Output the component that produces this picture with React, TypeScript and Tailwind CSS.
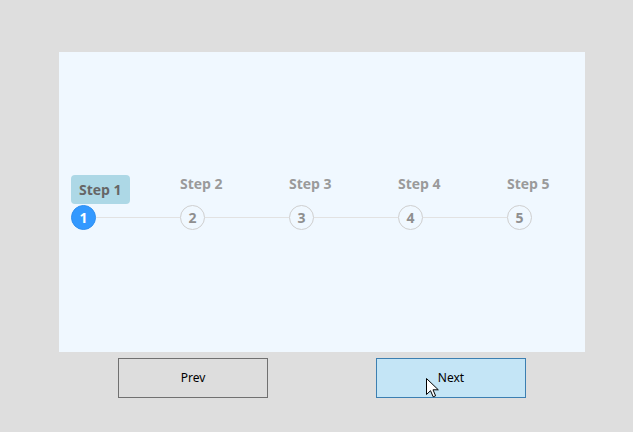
import React from "react";

const steps = [1, 2, 3, 4, 5];

function Step({ n, active, last }: { n: number; active: boolean; last: boolean }) {
  return (
    <div className="flex flex-col w-[109px] shrink-0">
      <div className="h-[30px] flex items-end">
        {active ? (
          <div className="bg-[#add8e6] rounded-[4px] px-[8px] pt-[5px] pb-[4px] mb-px text-[14px] leading-[20px] font-bold text-[#666666]">
            Step {n}
          </div>
        ) : (
          <div className="mb-[11px] text-[14px] leading-[20px] font-bold text-[#9a9a9a]">
            Step {n}
          </div>
        )}
      </div>
      <div className="flex items-center h-[25px]">
        {active ? (
          <div className="w-[25px] h-[25px] rounded-full bg-[#3399ff] border border-[#2f8ff0] flex items-center justify-center text-white text-[14px] font-bold shrink-0">
            {n}
          </div>
        ) : (
          <div className="w-[25px] h-[25px] rounded-full border border-[#cfcfcf] flex items-center justify-center text-[#8f8f8f] text-[14px] font-bold shrink-0">
            {n}
          </div>
        )}
        {!last && <div className="flex-1 h-px bg-[#e2e2e2]" />}
      </div>
    </div>
  );
}

export default function App() {
  return (
    <div
      className="relative w-[633px] h-[432px] bg-[#dedede] overflow-hidden"
      style={{ fontFamily: '"Open Sans", "Noto Sans", sans-serif' }}
    >
      <div className="pt-[52px] pl-[59px]">
        <div className="w-[526px] h-[300px] bg-[#f0f8ff] pl-[12px] pt-[123px]">
          <div className="flex">
            {steps.map((n, i) => (
              <Step key={n} n={n} active={i === 0} last={i === steps.length - 1} />
            ))}
          </div>
        </div>
        <div className="flex mt-[6px]">
          <button
            className="ml-[59px] w-[150px] h-[40px] border border-[#707070] bg-[#dddddd] text-[12px] text-black"
            style={{ fontFamily: '"Noto Sans", "Open Sans", sans-serif' }}
          >
            Prev
          </button>
          <button
            className="ml-[108px] w-[150px] h-[40px] border border-[#3c7fb1] bg-[#c4e5f6] text-[12px] text-black"
            style={{ fontFamily: '"Noto Sans", "Open Sans", sans-serif' }}
          >
            Next
          </button>
        </div>
      </div>
      <svg
        className="absolute left-[426px] top-[378px]"
        width="13"
        height="20"
        viewBox="0 0 13 20"
      >
        <path
          d="M0.5 0.5 L0.5 16.5 L4.5 12.7 L7.2 18.8 L9.6 17.8 L7 11.8 L12.3 11.8 Z"
          fill="white"
          stroke="black"
          strokeWidth="1"
          strokeLinejoin="miter"
        />
      </svg>
    </div>
  );
}
